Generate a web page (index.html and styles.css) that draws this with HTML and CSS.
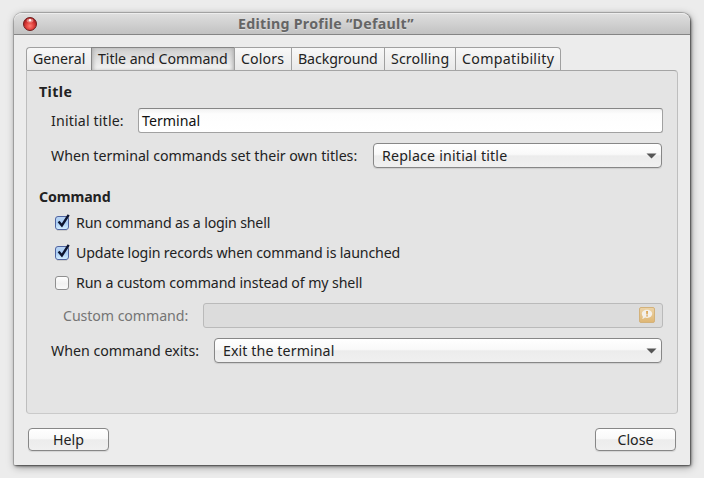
FILE: index.html
```
<!DOCTYPE html>
<html lang="en">
<head>
<meta charset="utf-8">
<title>Editing Profile “Default”</title>
<link rel="stylesheet" href="styles.css">
</head>
<body>
<main class="window">
  <header class="titlebar">
    <svg class="close-orb" width="16" height="16" viewBox="0 0 16 16" aria-label="Close window">
      <defs>
        <radialGradient id="orb" cx=".5" cy=".65" r=".55"><stop offset="0" stop-color="#ff7b70"/><stop offset=".55" stop-color="#e0413c"/><stop offset="1" stop-color="#ad1d20"/></radialGradient>
      </defs>
      <circle cx="8" cy="8" r="6.5" fill="url(#orb)" stroke="#70201f"/>
      <ellipse cx="8" cy="4.6" rx="3.4" ry="2" fill="#f7a7a1" opacity=".65"/>
      <circle cx="8" cy="4.3" r="1.2" fill="#fff"/>
    </svg>
    <h1 class="caption"><span class="t-caption">Editing Profile “Default”</span></h1>
  </header>
  <nav class="tabs">
    <div class="tab tab-general"><span>General</span></div>
    <div class="tab tab-title active"><span>Title and Command</span></div>
    <div class="tab tab-colors"><span>Colors</span></div>
    <div class="tab tab-background"><span>Background</span></div>
    <div class="tab tab-scrolling"><span>Scrolling</span></div>
    <div class="tab tab-compat"><span>Compatibility</span></div>
  </nav>
  <section class="panel">
    <h2 class="heading"><span class="t-title">Title</span></h2>
    <div class="row row-initial"><label><span class="t-initial">Initial title:</span></label><div class="entry"><span class="t-terminal">Terminal</span></div></div>
    <div class="row row-set"><label><span class="t-set">When terminal commands set their own titles:</span></label>
      <div class="combo"><span class="t-replace">Replace initial title</span><svg width="11" height="6" viewBox="0 0 11 6"><path d="M.5 .5h10L5.5 5.6z" fill="#555"/></svg></div></div>
    <h2 class="heading command"><span class="t-command">Command</span></h2>
    <div class="check"><svg width="18" height="20" viewBox="0 0 18 20"><use href="#checked"/></svg><span class="t-login">Run command as a login shell</span></div>
    <div class="check"><svg width="18" height="20" viewBox="0 0 18 20"><use href="#checked"/></svg><span class="t-update">Update login records when command is launched</span></div>
    <div class="check"><svg width="18" height="20" viewBox="0 0 18 20"><use href="#unchecked"/></svg><span class="t-custom">Run a custom command instead of my shell</span></div>
    <div class="row row-custom"><label><span class="t-customcmd">Custom command:</span></label>
      <div class="entry disabled"><svg width="16" height="16" viewBox="0 0 16 16"><rect x=".5" y=".5" width="15" height="15" rx="1.5" fill="url(#warn)" stroke="#d3b27b"/><path d="M8 2.7c3 0 5.2 1.8 5.2 4.1S11 10.9 8 10.9c-.7 0-1.4-.1-2-.3-.8.9-1.8 1.4-3 1.5.6-.6.9-1.400.9-2.400C3.200 8.900 2.800 7.900 2.800 6.800c0-2.300 2.200-4.100 5.200-4.100z" fill="#f4f0ea"/><path d="M7.200 4h1.700L8.700 7.500H7.400zM7.300 8.200h1.500v1.300H7.300z" fill="#d99c43"/></svg></div></div>
    <div class="row row-exits"><label><span class="t-exits">When command exits:</span></label>
      <div class="combo"><span class="t-exit">Exit the terminal</span><svg width="11" height="6" viewBox="0 0 11 6"><path d="M.5 .5h10L5.5 5.6z" fill="#555"/></svg></div></div>
  </section>
  <footer class="actions">
    <button><span class="t-help">Help</span></button>
    <button><span class="t-close">Close</span></button>
  </footer>
</main>
<svg class="defs" width="0" height="0" aria-hidden="true">
  <defs>
    <linearGradient id="blue" x2="0" y2="1"><stop offset="0" stop-color="#b9d4f3"/><stop offset=".5" stop-color="#a9cdf5"/><stop offset="1" stop-color="#d6f0ff"/></linearGradient>
    <linearGradient id="white" x2="0" y2="1"><stop offset="0" stop-color="#fff"/><stop offset=".55" stop-color="#f1f1f1"/><stop offset="1" stop-color="#fafafa"/></linearGradient>
    <linearGradient id="warn" x2="0" y2="1"><stop offset="0" stop-color="#ecd4a9"/><stop offset="1" stop-color="#dfb673"/></linearGradient>
    <g id="checked"><rect x="1.500" y="4.500" width="13" height="13" rx="2.500" fill="url(#blue)" stroke="#5064a0"/><path d="M3 18.500h10" stroke="#bbb" opacity=".6"/><path d="M4.600 9.400l3.300 4.100L14.700 2.800" fill="none" stroke="#0d1530" stroke-width="2.400"/></g>
    <g id="unchecked"><rect x="1.500" y="4.500" width="13" height="13" rx="2.500" fill="url(#white)" stroke="#8f8f8f"/></g>
  </defs>
</svg>
</body>
</html>
```
FILE: styles.css
```
* { box-sizing: border-box; }
body {
  margin: 0;
  width: 704px;
  height: 478px;
  padding: 13px 14px;
  background: #ececec;
  color: #222;
  font: 14.2px/20px "Noto Sans", sans-serif;
  overflow: hidden;
}
h1, h2 { margin: 0; font-size: inherit; }
span { white-space: nowrap; }
svg { display: block; flex: none; }
.defs { position: absolute; }
.window {
  width: 676px;
  height: 452px;
  background: #ececec;
  border-radius: 8px 8px 1px 1px;
  box-shadow: 0 0 0 1px rgba(0,0,0,.16), 1px 1px 3px rgba(0,0,0,.6), 1px 2px 8px rgba(0,0,0,.36);
}
.titlebar {
  height: 22px;
  display: flex;
  align-items: center;
  padding-left: 8px;
  border-top: 1px solid #ededed;
  border-bottom: 1px solid #858585;
  border-radius: 8px 8px 0 0;
  background: linear-gradient(#dedede, #c2c2c2);
}
.caption { margin-left: 200px; color: #656565; text-shadow: 0 1px #ddd; }
.tabs { display: flex; margin: 12px 0 0 12px; height: 23px; }
.tab {
  border: 1px solid #a0a0a0;
  border-width: 1px 0 0 1px;
  padding: 1px 0 0 6px;
  background: linear-gradient(#f8f8f8, #e8e8e8);
}
.tab-general { width: 65px; border-radius: 4px 0 0 0; }
.tab-title { width: 143px; letter-spacing: -.06px; }
.tab-colors { width: 57px; letter-spacing: .1px; }
.tab-background { width: 93px; letter-spacing: -.1px; }
.tab-scrolling { width: 71px; letter-spacing: .12px; }
.tab-compat { width: 106px; border-right-width: 1px; border-radius: 0 4px 0 0; letter-spacing: .3px; }
.tab.active {
  border-color: #858585;
  background: linear-gradient(#cecece, #e2e2e2 50%, #f4f4f4);
  box-shadow: inset 3px 0 4px -2px #aaa, inset -3px 0 4px -2px #aaa, 1px 0 #8b8b8b;
}
.panel {
  width: 652px;
  height: 344px;
  margin-left: 12px;
  padding: 11px 15px 0 12px;
  background: #e4e4e4;
  border: 1px solid #bebebe;
  border-top-color: #a4a4a4;
  border-bottom-color: #cacaca;
  border-radius: 0 4px 4px 4px;
}
.heading { height: 20px; }
.row { display: flex; align-items: center; height: 25px; }
.row label { flex: none; margin-left: 12px; }
.row-initial { margin-top: 6px; margin-right: -1px; }
.row-initial label { width: 87px; }
.row-set { margin-top: 10px; }
.row-set label { width: 322px; }
.command { margin: 19px 0 1px; }
.row-custom { margin-top: 5px; margin-right: -1px; color: #757575; }
.row-custom label { margin-left: 24px; width: 140px; }
.row-exits { margin-top: 10px; }
.row-exits label { width: 163px; }
.entry, .combo { flex: 1; height: 25px; display: flex; align-items: center; }
.entry {
  border: 1px solid #a1a1a1;
  border-top-color: #868686;
  border-radius: 3px;
  padding-left: 3px;
  background: linear-gradient(#f2f2f2, #fdfdfd 5px, #fff);
  color: #111;
}
.entry.disabled {
  justify-content: flex-end;
  padding: 0 7px 2px 0;
  border-color: #bababa;
  background: #dcdcdc;
}
.combo, button {
  border: 1px solid #878787;
  border-radius: 4px;
  background: linear-gradient(#fff, #f9f9f9 45%, #ececec 52%, #f0f0f0);
  box-shadow: 0 1px 1px rgba(0,0,0,.1);
}
.combo { justify-content: space-between; padding: 0 4px 0 8px; }
.check { display: flex; align-items: center; height: 30px; margin-left: 14px; }
.check svg { margin: -3px 4px 0 1px; }
.actions { display: flex; justify-content: space-between; padding: 14px 14px 0; }
button {
  width: 81px;
  height: 23px;
  padding: 0;
  color: #222;
  font: inherit;
  line-height: 20px;
}
.t-caption { letter-spacing: .29px; }
.t-title { letter-spacing: .4px; }
.t-command { letter-spacing: -.12px; }
.t-initial { letter-spacing: .15px; }
.t-set { letter-spacing: -.02px; }
.t-replace { letter-spacing: .19px; }
.t-login { letter-spacing: -.18px; }
.t-update { letter-spacing: -.14px; }
.t-custom { letter-spacing: -.11px; }
.t-customcmd { letter-spacing: -.08px; }
.t-exit { letter-spacing: .1px; }
```
